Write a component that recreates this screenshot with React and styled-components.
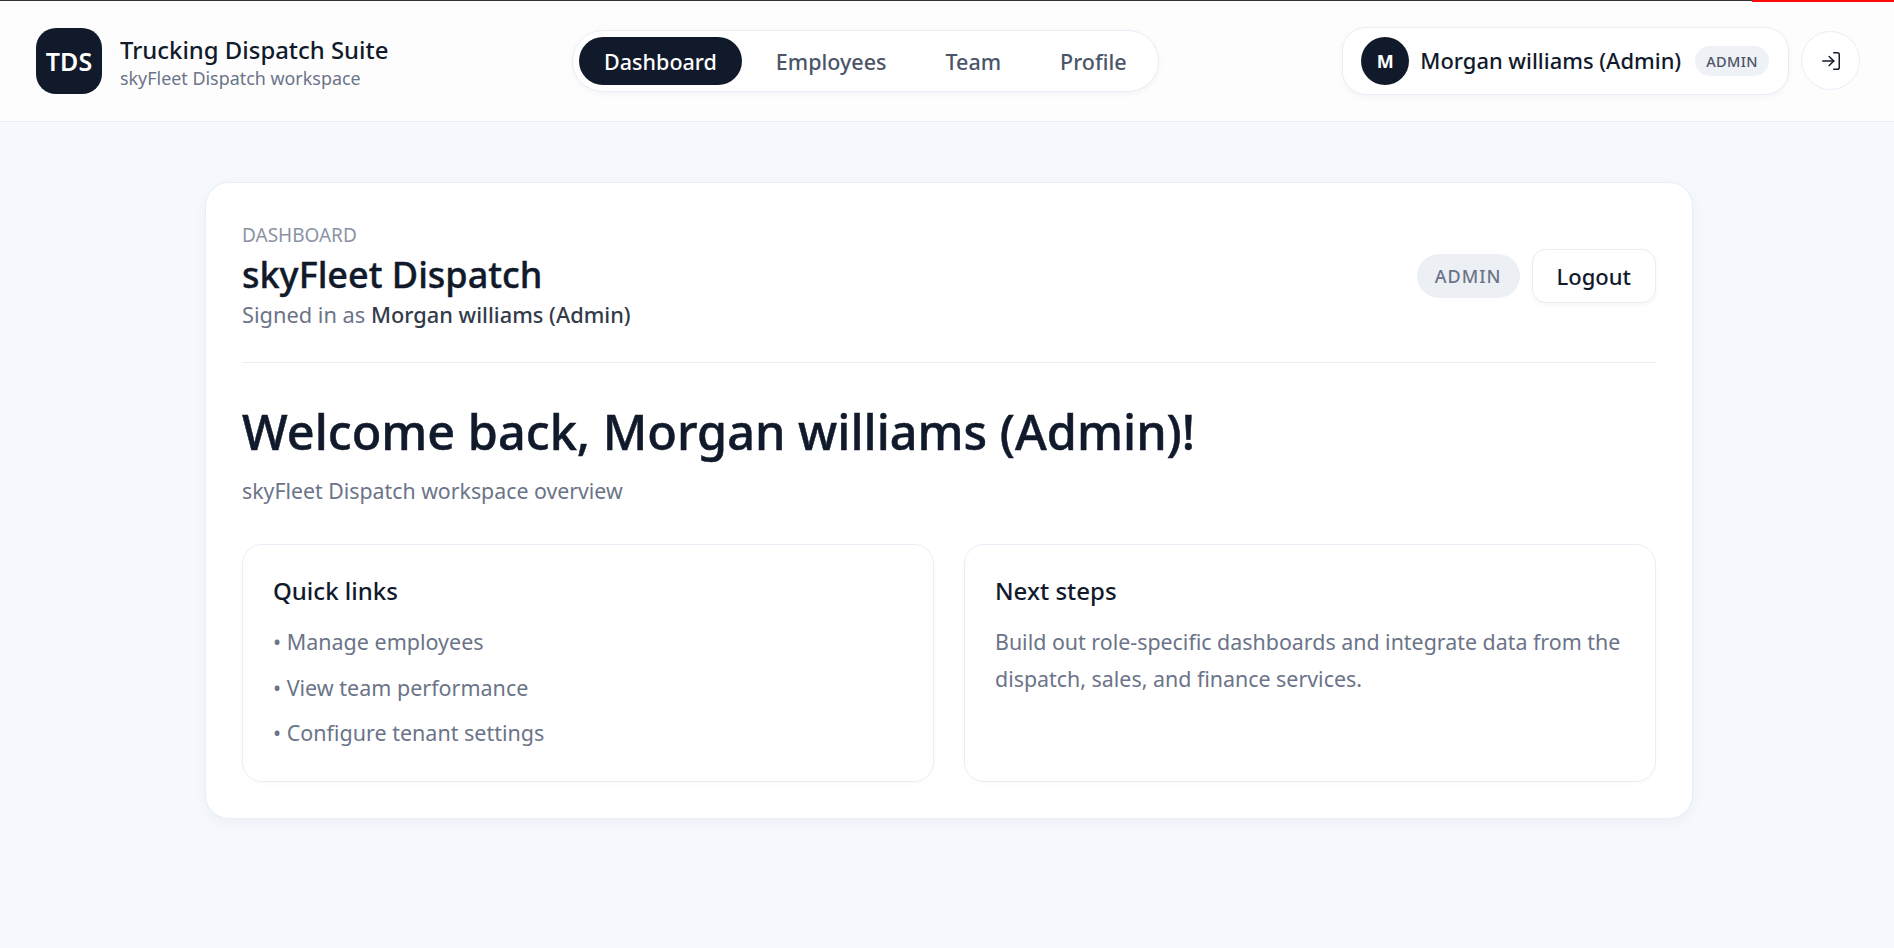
import React from 'react';
import styled, { createGlobalStyle } from 'styled-components';
import { LogIn } from 'lucide-react';

const GlobalStyle = createGlobalStyle`
  html, body { margin: 0; padding: 0; }
  body {
    background: #f5f8fc;
    font-family: "Noto Sans", "Open Sans", sans-serif;
    color: #111a2b;
  }
  * { box-sizing: border-box; }
`;

const Page = styled.div`
  position: relative;
  min-height: 948px;
  background: #f5f8fc;
`;

const TopEdge = styled.div`
  position: absolute;
  top: 0;
  left: 0;
  right: 0;
  height: 1px;
  background: #2f3338;
`;

const LoadBar = styled.div`
  position: absolute;
  top: 0;
  right: 0;
  width: 142px;
  height: 2px;
  background: #fb0a0a;
`;

const Header = styled.header`
  height: 122px;
  padding: 0 34px 0 36px;
  display: flex;
  justify-content: space-between;
  align-items: center;
  background: #fdfdfe;
  border-bottom: 1px solid #e8eef6;
`;

const Brand = styled.div`
  display: flex;
  align-items: center;
  gap: 18px;
`;

const Logo = styled.div`
  width: 66px;
  height: 66px;
  border-radius: 20px;
  background: #111a2b;
  color: #fff;
  display: flex;
  align-items: center;
  justify-content: center;
  font-size: 25px;
  font-weight: 600;
`;

const BrandText = styled.div`
  display: flex;
  flex-direction: column;
  padding-top: 2px;
`;

const BrandTitle = styled.div`
  font-size: 23.9px;
  line-height: 32px;
  font-weight: 500;
  color: #111a2b;
`;

const BrandSub = styled.div`
  font-size: 17.9px;
  line-height: 24px;
  color: #6b7488;
`;

const Nav = styled.nav`
  display: flex;
  gap: 9px;
  padding: 6px;
  height: 62px;
  background: #fff;
  border: 1px solid #e8eef6;
  border-radius: 31px;
  box-shadow: 0 2px 6px rgba(17, 26, 43, 0.04);
`;

const NavItem = styled.a`
  display: flex;
  align-items: center;
  padding: 1px 25px 0;
  border-radius: 24px;
  font-size: 21.5px;
  font-weight: 500;
  color: ${({ $active }) => ($active ? '#fff' : '#4b5567')};
  background: ${({ $active }) => ($active ? '#111a2b' : 'none')};
`;

const UserArea = styled.div`
  display: flex;
  align-items: center;
  gap: 12px;
`;

const UserPill = styled.div`
  height: 68px;
  padding: 0 19px 0 18px;
  display: flex;
  align-items: center;
  gap: 11px;
  background: #fff;
  border: 1px solid #e8eef6;
  border-radius: 24px;
  box-shadow: 0 2px 6px rgba(17, 26, 43, 0.04);
`;

const Avatar = styled.div`
  width: 48px;
  height: 48px;
  border-radius: 50%;
  background: #111a2b;
  color: #fff;
  display: flex;
  align-items: center;
  justify-content: center;
  font-size: 18px;
  font-weight: 700;
`;

const UserName = styled.span`
  font-size: 21.9px;
  font-weight: 500;
  color: #111a2b;
`;

const SmallBadge = styled.span`
  margin-left: 3px;
  padding: 0 11px;
  height: 30px;
  display: flex;
  align-items: center;
  border-radius: 15px;
  background: #eef1f6;
  color: #4b5567;
  font-size: 14.5px;
  font-weight: 500;
  letter-spacing: 0.4px;
`;

const IconButton = styled.button`
  width: 59px;
  height: 59px;
  padding: 0;
  display: flex;
  align-items: center;
  justify-content: center;
  background: #fff;
  border: 1px solid #e8eef6;
  border-radius: 50%;
  color: #111a2b;
`;

const Main = styled.main`
  padding: 60px 201px 0 205px;
`;

const Panel = styled.section`
  padding: 40px 36px 36px;
  background: #fff;
  border: 1px solid #e8eef6;
  border-radius: 24px;
  box-shadow: 0 4px 14px rgba(17, 26, 43, 0.04);
`;

const PanelHead = styled.div`
  display: flex;
  justify-content: space-between;
  align-items: center;
  padding-bottom: 32px;
  border-bottom: 1px solid #e8eef6;
`;

const Eyebrow = styled.div`
  font-size: 19px;
  line-height: 24px;
  color: #8a93a5;
`;

const PanelTitle = styled.h1`
  margin: 0;
  padding-top: 3px;
  font-size: 36px;
  line-height: 50px;
  font-weight: 500;
  -webkit-text-stroke: 0.4px #111a2b;
  color: #111a2b;
`;

const SignedIn = styled.div`
  font-size: 21.8px;
  line-height: 30px;
  color: #6b7488;

  strong {
    font-weight: 500;
    color: #333b4b;
  }
`;

const HeadActions = styled.div`
  display: flex;
  align-items: center;
  gap: 12px;
  margin-bottom: 2px;
`;

const RoleBadge = styled.span`
  height: 44px;
  padding: 0 18px;
  display: flex;
  align-items: center;
  border-radius: 22px;
  background: #eceff4;
  color: #6b7488;
  font-size: 18px;
  font-weight: 500;
  letter-spacing: 1px;
`;

const LogoutButton = styled.button`
  height: 54px;
  padding: 0 24px;
  background: #fff;
  border: 1px solid #e8eef6;
  border-radius: 14px;
  box-shadow: 0 2px 4px rgba(17, 26, 43, 0.04);
  font-family: inherit;
  font-size: 22px;
  font-weight: 500;
  color: #111a2b;
`;

const Welcome = styled.h2`
  margin: 34px 0 0;
  font-size: 48.6px;
  line-height: 68px;
  font-weight: 500;
  -webkit-text-stroke: 0.5px #111a2b;
  color: #111a2b;
`;

const Overview = styled.p`
  margin: 10px 0 0;
  font-size: 21.3px;
  line-height: 32px;
  color: #6b7488;
`;

const CardGrid = styled.div`
  margin-top: 37px;
  display: grid;
  grid-template-columns: 1fr 1fr;
  gap: 30px;
`;

const InfoCard = styled.div`
  height: 238px;
  padding: 30px;
  border: 1px solid #e8eef6;
  border-radius: 20px;
  box-shadow: 0 2px 4px rgba(17, 26, 43, 0.02);
`;

const CardTitle = styled.h3`
  margin: 0 0 16px;
  font-size: 24px;
  line-height: 32px;
  font-weight: 500;
  color: #111a2b;
`;

const LinkRow = styled.div`
  font-size: 21.5px;
  line-height: 37px;
  margin-bottom: 8.6px;
  color: #6b7488;
`;

const CardText = styled.p`
  margin: 0;
  padding-top: 1px;
  font-size: 21.4px;
  line-height: 36.5px;
  color: #6b7488;
`;

export default function App() {
  return (
    <Page>
      <GlobalStyle />
      <TopEdge />
      <LoadBar />
      <Header>
        <Brand>
          <Logo>TDS</Logo>
          <BrandText>
            <BrandTitle>Trucking Dispatch Suite</BrandTitle>
            <BrandSub>skyFleet Dispatch workspace</BrandSub>
          </BrandText>
        </Brand>
        <Nav>
          <NavItem $active>Dashboard</NavItem>
          <NavItem>Employees</NavItem>
          <NavItem>Team</NavItem>
          <NavItem>Profile</NavItem>
        </Nav>
        <UserArea>
          <UserPill>
            <Avatar>M</Avatar>
            <UserName>Morgan williams (Admin)</UserName>
            <SmallBadge>ADMIN</SmallBadge>
          </UserPill>
          <IconButton>
            <LogIn size={22} strokeWidth={1.6} />
          </IconButton>
        </UserArea>
      </Header>
      <Main>
        <Panel>
          <PanelHead>
            <div>
              <Eyebrow>DASHBOARD</Eyebrow>
              <PanelTitle>skyFleet Dispatch</PanelTitle>
              <SignedIn>
                Signed in as <strong>Morgan williams (Admin)</strong>
              </SignedIn>
            </div>
            <HeadActions>
              <RoleBadge>ADMIN</RoleBadge>
              <LogoutButton>Logout</LogoutButton>
            </HeadActions>
          </PanelHead>
          <Welcome>Welcome back, Morgan williams (Admin)!</Welcome>
          <Overview>skyFleet Dispatch workspace overview</Overview>
          <CardGrid>
            <InfoCard>
              <CardTitle>Quick links</CardTitle>
              <LinkRow>• Manage employees</LinkRow>
              <LinkRow>• View team performance</LinkRow>
              <LinkRow>• Configure tenant settings</LinkRow>
            </InfoCard>
            <InfoCard>
              <CardTitle>Next steps</CardTitle>
              <CardText>
                Build out role-specific dashboards and integrate data from the dispatch, sales, and
                finance services.
              </CardText>
            </InfoCard>
          </CardGrid>
        </Panel>
      </Main>
    </Page>
  );
}
